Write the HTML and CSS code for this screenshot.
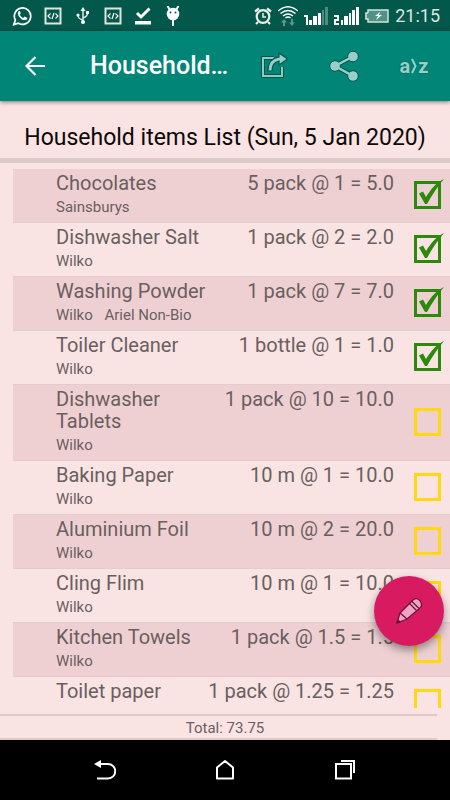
FILE: index.html
```html
<!DOCTYPE html>
<html lang="en">
<head>
<meta charset="utf-8">
<meta name="viewport" content="width=device-width, initial-scale=1">
<title>Household items</title>
<link rel="stylesheet" href="styles.css">
</head>
<body>
<svg class="defs" aria-hidden="true">
  <symbol id="tick" viewBox="0 0 31 31">
    <path d="M5 15.500l4-2 3 5.500C17 11 22 5 30 1 24 8 18 17 13 26h-2z"/>
  </symbol>
  <symbol id="code" viewBox="0 0 18 18">
    <rect x="1.500" y="1.500" width="15" height="15" fill="none" stroke="#e4e4df" stroke-width="2"/>
    <path d="M6.500 6.500L4 9l2.500 2.500M11.500 6.500L14 9l-2.500 2.500M10 6l-2 6" fill="none" stroke="#fff" stroke-width="1.200"/>
  </symbol>
</svg>

<div class="status">
  <div class="notices">
    <svg width="20" height="22" viewBox="0 0 22 22"><path d="M2 20.500l1.700-5A9 9 0 1 1 7 18.900z" fill="none" stroke="#fff" stroke-width="1.900"/><path d="M7.200 5.700c-3 3.500 3.500 11.400 8.300 9.500 1.500-.8 1.300-1.500 1.100-2.400l-2.700-1.300-1.500 1.600c-2-.8-3.300-2.200-3.900-3.700L9.700 8 8.600 5.600z" fill="#fff"/></svg>
    <svg width="18" height="18"><use href="#code"/></svg>
    <svg width="18" height="18" viewBox="0 0 18 18"><path d="M9 3v13M9 13c-4-1-5-2-5-5M9 11c3-1 4.500-2 4.500-5" fill="none" stroke="#e4e4df" stroke-width="1.500"/><path d="M9 0l2.500 4h-5z" fill="#fff"/><circle cx="4" cy="8" r="1.600" fill="#fff"/><rect x="12" y="4" width="3" height="3" fill="#fff"/><circle cx="9" cy="15" r="2" fill="#fff"/></svg>
    <svg width="18" height="18"><use href="#code"/></svg>
    <svg width="18" height="18" viewBox="0 0 18 18"><path d="M3 6l4 4 8.500-8.500" fill="none" stroke="#fff" stroke-width="3"/><path d="M1 14h16v3.500H1z" fill="#fff"/></svg>
    <svg width="18" height="20" viewBox="0 0 18 20"><circle cx="9" cy="8" r="6.300" fill="#fff"/><path d="M3.500 0l2.500 4M14.500 0L12 4M9 14v6" stroke="#fff" stroke-width="2"/><circle cx="6.500" cy="6.500" r="1" fill="#01584b"/><circle cx="11.500" cy="6.500" r="1" fill="#01584b"/></svg>
  </div>
  <div class="system">
    <svg width="18" height="18" viewBox="0 0 18 18" fill="none" stroke="#ededea"><circle cx="9" cy="9.500" r="6.300" stroke-width="2.200"/><path d="M1 4.500l4-3M17 4.500l-4-3M4 15l-2 2M14 15l2 2" stroke-width="2.200"/><path d="M9 6v4h3" stroke-width="1.500"/></svg>
    <svg width="20" height="20" viewBox="0 0 20 20"><path d="M0 5q10-8.500 20 0M2.500 7.500q7.500-6 15 0M5 10q5-4 10 0M7.500 12q2.500-2 5 0" fill="none" stroke="#fff" stroke-width="1.500"/><path d="M3 16.500L6 13l3 3.500H7V20H5v-3.500zM11 16.500h2V13h2v3.500h2L14 20z" fill="#5b958b"/></svg>
    <svg width="24" height="19" viewBox="0 0 24 19"><path d="M0 9h4v10H2v-8H0z" fill="#fff"/><path d="M5 14h3v5H5zM9 10h4v9H9zM14 7h3v12h-3z" fill="#fff"/><path d="M18 4h2v15h-2zM21 1h3v18h-3z" fill="#4e8c82"/></svg>
    <svg width="25" height="19" viewBox="0 0 25 19" fill="#fff"><path d="M0 9h5v6H2v2h3v2H0v-6h3v-2H0zM7 14h2v5H7zM10 10h4v9h-4zM15 7h2v12h-2zM18 4h3v15h-3zM22 1h3v18h-3z"/></svg>
    <svg width="24" height="14" viewBox="0 0 24 14"><path d="M3 1h20v12H3zM0 4h3v6H0z" fill="#4d9388"/><path d="M3 4H1v6h2v3h20V1H3v3" fill="none" stroke="#d8dfd9" stroke-width="1.500"/><path d="M15 3l-5 4h3l-2 4 6-5h-3z" fill="#fff"/></svg>
    <span class="clock">21:15</span>
  </div>
</div>

<header class="appbar">
  <button class="back" aria-label="Back"><svg width="20" height="20" viewBox="0 0 20 20"><path d="M20 10H2M10.500 1L1.500 10l9 9" fill="none" stroke="#fff" stroke-width="2.200"/></svg></button>
  <h1>Household…</h1>
  <div class="actions">
    <button aria-label="Export"><svg width="30" height="30" viewBox="0 0 30 30"><path d="M15 7H4v18h19V16" fill="none" stroke="#04574e" stroke-width="4"/><path d="M15 7H4v18h19V16" fill="none" stroke="#8fc9c0" stroke-width="2"/><path d="M9 20C9 11 13 7 20 6V2l8.500 6-8.500 6v-4c-5 1-7 4-7 10z" fill="#98cfc7" stroke="#04574e" stroke-width="1.200"/></svg></button>
    <button aria-label="Share"><svg width="32" height="32" viewBox="0 0 32 32"><path d="M25 6.500L7 16l18 10" fill="none" stroke="#04574e" stroke-width="4.500"/><g fill="#98cfc7" stroke="#04574e" stroke-width="1"><circle cx="25" cy="6.500" r="5.300"/><circle cx="7" cy="16" r="5.300"/><circle cx="25" cy="26" r="5.300"/></g><path d="M25 6.500L7 16l18 10" fill="none" stroke="#98cfc7" stroke-width="2.500"/></svg></button>
    <button class="sort" aria-label="Sort a to z"><span>a</span><svg width="6" height="16" viewBox="0 0 6 16"><path d="M1 1l3.500 7L1 15" fill="none" stroke="#98cfc7" stroke-width="2"/></svg><span>z</span></button>
  </div>
</header>

<main>
  <h2>Household items List (Sun, 5 Jan 2020)</h2>
  <ul class="items">
    <li><label for="i1">Chocolates</label><span class="price">5 pack @ 1 = 5.0</span><span class="store">Sainsburys</span><span class="check"><input type="checkbox" id="i1" checked><svg><use href="#tick"/></svg></span></li>
    <li><label for="i2">Dishwasher Salt</label><span class="price">1 pack @ 2 = 2.0</span><span class="store">Wilko</span><span class="check"><input type="checkbox" id="i2" checked><svg><use href="#tick"/></svg></span></li>
    <li><label for="i3">Washing Powder</label><span class="price">1 pack @ 7 = 7.0</span><span class="store">Wilko <span class="note">Ariel Non-Bio</span></span><span class="check"><input type="checkbox" id="i3" checked><svg><use href="#tick"/></svg></span></li>
    <li><label for="i4">Toiler Cleaner</label><span class="price">1 bottle @ 1 = 1.0</span><span class="store">Wilko</span><span class="check"><input type="checkbox" id="i4" checked><svg><use href="#tick"/></svg></span></li>
    <li><label for="i5">Dishwasher Tablets</label><span class="price">1 pack @ 10 = 10.0</span><span class="store">Wilko</span><span class="check"><input type="checkbox" id="i5"><svg><use href="#tick"/></svg></span></li>
    <li><label for="i6">Baking Paper</label><span class="price">10 m @ 1 = 10.0</span><span class="store">Wilko</span><span class="check"><input type="checkbox" id="i6"><svg><use href="#tick"/></svg></span></li>
    <li><label for="i7">Aluminium Foil</label><span class="price">10 m @ 2 = 20.0</span><span class="store">Wilko</span><span class="check"><input type="checkbox" id="i7"><svg><use href="#tick"/></svg></span></li>
    <li><label for="i8">Cling Flim</label><span class="price">10 m @ 1 = 10.0</span><span class="store">Wilko</span><span class="check"><input type="checkbox" id="i8"><svg><use href="#tick"/></svg></span></li>
    <li><label for="i9">Kitchen Towels</label><span class="price">1 pack @ 1.5 = 1.5</span><span class="store">Wilko</span><span class="check"><input type="checkbox" id="i9"><svg><use href="#tick"/></svg></span></li>
    <li><label for="i10">Toilet paper</label><span class="price">1 pack @ 1.25 = 1.25</span><span class="store">Wilko</span><span class="check"><input type="checkbox" id="i10"><svg><use href="#tick"/></svg></span></li>
  </ul>
  <p class="total">Total: 73.75</p>
  <button class="fab" aria-label="Edit list"><svg width="28" height="28" viewBox="0 0 28 28"><g fill="#f0a3c4" stroke="#6d1038" stroke-width="1.200" stroke-linejoin="round"><path d="M2 26l3-10L18 3q4-3 7 1t0 7L12 22z"/><path d="M5 16l7 6M14.500 6.500l7 7M17 4.500l7 7" fill="none"/><path d="M2 26l1-3 2 2z" fill="#6d1038"/></g></svg></button>
</main>

<nav class="softkeys">
  <button aria-label="Back"><svg width="22" height="22" viewBox="0 0 22 22"><path d="M6 5h8a7 7 0 0 1 0 14.500H3" fill="none" stroke="#fff" stroke-width="2"/><path d="M0 5l7-4v8z" fill="#fff"/></svg></button>
  <button aria-label="Home"><svg width="22" height="22" viewBox="0 0 22 22"><path d="M3 19.500V8.500L11 2l8 6.500v11z" fill="none" stroke="#fff" stroke-width="2" stroke-linejoin="round"/></svg></button>
  <button aria-label="Recent apps"><svg width="22" height="22" viewBox="0 0 22 22"><path d="M2 5h15v14.500H2zM7 2h13v12" fill="none" stroke="#fff" stroke-width="2"/></svg></button>
</nav>
</body>
</html>
```
FILE: styles.css
```css
* { box-sizing: border-box; }
body {
  margin: 0;
  height: 100vh;
  display: flex;
  flex-direction: column;
  background: #f9e3e3;
  font-family: Roboto, "Liberation Sans", sans-serif;
  color: #6a5f5f;
}
button { border: 0; padding: 0; background: none; font: inherit; color: inherit; }
svg { display: block; flex: none; }
.defs { position: absolute; width: 0; height: 0; }

.status {
  display: flex;
  justify-content: space-between;
  align-items: center;
  height: 31px;
  flex: none;
  padding: 0 10px 0 12px;
  background: #01584b;
  color: #dfe5e1;
}
.notices { display: flex; align-items: center; gap: 12px; }
.system { display: flex; align-items: center; gap: 6px; }
.clock { font-size: 18px; line-height: 31px; }

.appbar {
  display: flex;
  align-items: center;
  height: 70px;
  flex: none;
  padding: 0 20px 0 25px;
  background: #018577;
  box-shadow: 0 1px 4px rgba(0, 0, 0, 0.5);
  position: relative;
}
.back { flex: none; margin-right: 45px; }
h1 {
  flex: 1;
  min-width: 0;
  margin: 0 16px 0 0;
  overflow: hidden;
  white-space: nowrap;
  text-overflow: ellipsis;
  font-size: 25px;
  font-weight: 500;
  line-height: 34px;
  color: #fff;
}
.actions { display: flex; align-items: center; gap: 38px; }
.actions button { width: 32px; display: flex; justify-content: center; }
.actions .sort {
  align-items: center;
  gap: 1px;
  font-size: 20px;
  font-weight: 700;
  line-height: 24px;
  color: #98cfc7;
  text-shadow: 0 0 2px #04574e;
}

main { flex: 1; min-height: 0; display: flex; flex-direction: column; position: relative; }
h2 {
  margin: 0;
  padding: 21px 0 4px;
  border-bottom: 5px solid #dfcaca;
  text-align: center;
  white-space: nowrap;
  font-size: 23px;
  font-weight: 400;
  line-height: 32px;
  color: #0d0909;
}
.items {
  flex: 1;
  min-height: 0;
  overflow: hidden;
  margin: 6px 0 6px 13px;
  padding: 0;
  list-style: none;
}
.items li {
  display: grid;
  grid-template-columns: 9fr 11fr 56px;
  padding: 3px 0 6px 43px;
  border-bottom: 1px solid #e2cccc;
}
.items li:nth-child(odd) { background: #efd0d2; }
label, .price { font-size: 20px; line-height: 22px; }
.price { text-align: right; white-space: nowrap; }
.store { grid-column: 1 / 3; padding-top: 4px; font-size: 15px; line-height: 18px; }
.note { margin-left: 8px; }
.check {
  grid-column: 3;
  grid-row: 1 / 3;
  align-self: center;
  justify-self: end;
  margin: 1px 9px 0 0;
  position: relative;
}
.check input {
  display: block;
  appearance: none;
  width: 27px;
  height: 28px;
  margin: 0;
  border: 3px solid #ffd90f;
}
.check input:checked { border-color: #2b8a0b; }
.check svg { display: none; position: absolute; left: 0; top: -3px; width: 31px; height: 31px; fill: #2b8a0b; pointer-events: none; }
.check input:checked + svg { display: block; }

.total {
  margin: 0 13px 0 0;
  border: solid #dfcaca;
  border-width: 2px 0;
  padding: 2px 0 0 13px;
  text-align: center;
  font-size: 15px;
  line-height: 20px;
}
.fab {
  position: absolute;
  right: 6px;
  bottom: 94px;
  width: 70px;
  height: 70px;
  display: flex;
  align-items: center;
  justify-content: center;
  border-radius: 50%;
  background: #d81b60;
  box-shadow: 0 4px 8px rgba(0, 0, 0, 0.4);
}

.softkeys { display: flex; justify-content: center; align-items: center; gap: 98px; height: 60px; flex: none; background: #000; }
```
